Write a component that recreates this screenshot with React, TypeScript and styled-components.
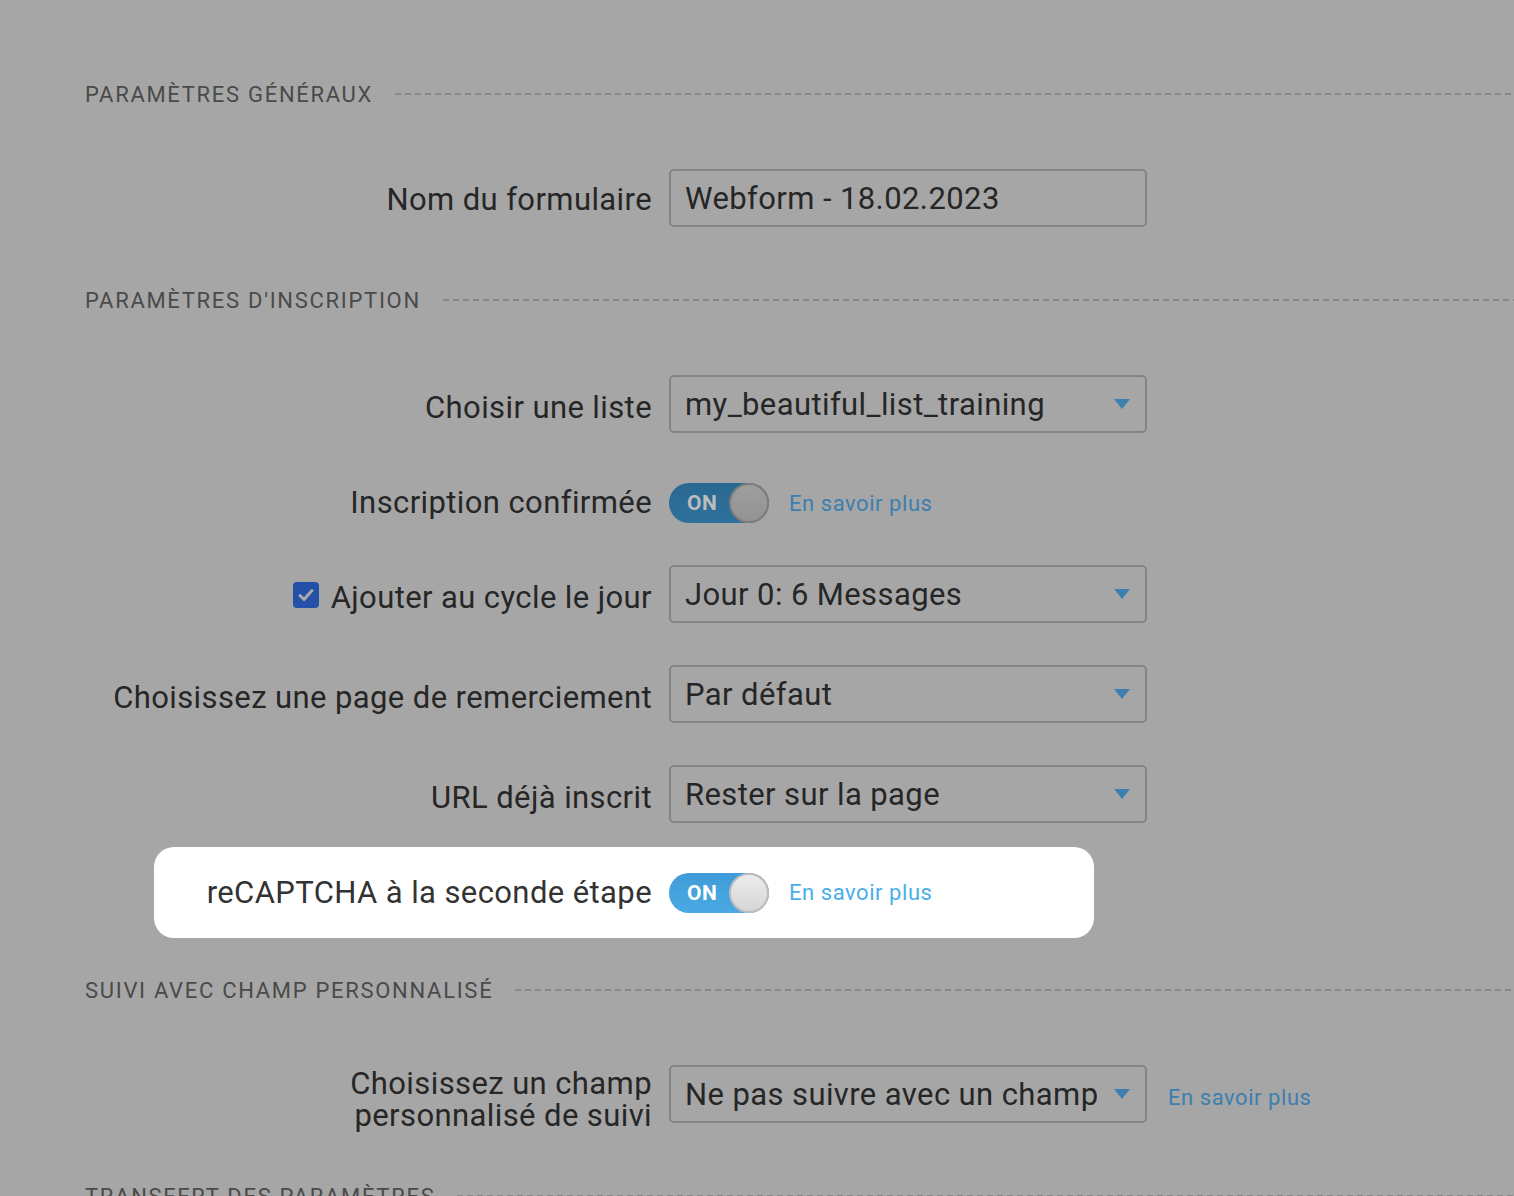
import React from "react";
import styled, { createGlobalStyle, css } from "styled-components";

const GlobalStyle = createGlobalStyle`
  html, body {
    margin: 0;
    padding: 0;
    background: #a6a6a6;
    font-family: Roboto, "Liberation Sans", Arial, sans-serif;
    overflow: hidden;
  }
`;

const Page = styled.div`
  width: 1514px;
  height: 1196px;
  overflow: hidden;
  padding-top: 42px;
  box-sizing: border-box;
`;

const SectionHeading = styled.div`
  display: flex;
  align-items: center;
  height: 106px;
  padding-left: 85px;
  padding-bottom: 2px;
  box-sizing: border-box;

  span {
    font-size: 22px;
    letter-spacing: 1.7px;
    color: #4a4a4a;
    white-space: nowrap;
  }

  &::after {
    content: "";
    flex: 1;
    height: 2px;
    margin-left: 22px;
    background: repeating-linear-gradient(
      to right,
      #888888 0 6px,
      transparent 6px 10px
    );
  }
`;

const Row = styled.div<{ $height?: number; $lit?: boolean; $shift?: number }>`
  display: grid;
  grid-template-columns: 567px 478px auto;
  column-gap: 17px;
  align-items: center;
  height: ${(p) => p.$height ?? 100}px;
  padding-top: ${(p) => p.$shift ?? 0}px;
  padding-left: 85px;
  box-sizing: border-box;

  ${(p) =>
    p.$lit &&
    css`
      background: #ffffff;
      border-radius: 20px;
      margin: 3px 0 0 154px;
      width: 940px;
      padding-left: 0;
      grid-template-columns: 498px 478px;
    `}
`;

const Label = styled.label<{ $lit?: boolean; $drop?: number }>`
  display: flex;
  align-items: center;
  justify-content: flex-end;
  gap: 10px;
  text-align: right;
  padding-top: ${(p) => p.$drop ?? 0}px;
  font-size: 31px;
  letter-spacing: 0.4px;
  line-height: 32px;
  color: ${(p) => (p.$lit ? "#333333" : "#262626")};
`;

const Check = styled.span`
  display: inline-flex;
  align-items: center;
  justify-content: center;
  width: 26px;
  height: 26px;
  border-radius: 4px;
  background: #2450a8;
  margin: -6px 2px 0 0;
`;

const Field = styled.div`
  position: relative;
  height: 58px;
  border: 2px solid #848484;
  border-radius: 5px;
  box-sizing: border-box;
  display: flex;
  align-items: center;
  padding: 0 48px 0 14px;
  font-size: 31px;
  letter-spacing: 0.4px;
  color: #262626;
`;

const Value = styled.span`
  flex: 1;
  overflow: hidden;
  white-space: nowrap;
`;

const Caret = styled.span`
  position: absolute;
  right: 15px;
  top: 50%;
  margin-top: -5px;
  width: 0;
  height: 0;
  border-left: 8px solid transparent;
  border-right: 8px solid transparent;
  border-top: 10px solid #3d7fae;
`;

const Inline = styled.div`
  display: flex;
  align-items: center;
  gap: 20px;
`;

const Toggle = styled.span<{ $lit?: boolean }>`
  position: relative;
  display: inline-flex;
  align-items: center;
  width: 100px;
  height: 40px;
  border-radius: 20px;
  box-sizing: border-box;
  padding-left: 18px;
  font-size: 21px;
  font-weight: 700;
  letter-spacing: 0.5px;
  background: ${(p) =>
    p.$lit
      ? "linear-gradient(#3f9cd8, #4aa9e2)"
      : "linear-gradient(#2a6892, #2f719d)"};
  color: ${(p) => (p.$lit ? "#ffffff" : "#bcbcbc")};
`;

const Knob = styled.span<{ $lit?: boolean }>`
  position: absolute;
  right: 0;
  top: 0;
  width: 40px;
  height: 40px;
  border-radius: 50%;
  box-sizing: border-box;
  border: 2px solid ${(p) => (p.$lit ? "#bdbdbd" : "#7e7e7e")};
  background: ${(p) =>
    p.$lit
      ? "linear-gradient(#ececec, #d6d6d6)"
      : "linear-gradient(#9e9e9e, #939393)"};
`;

const Link = styled.a<{ $lit?: boolean; $offset?: number }>`
  font-size: 22px;
  letter-spacing: 0.55px;
  margin-left: ${(p) => p.$offset ?? 0}px;
  padding-top: ${(p) => (p.$offset ? 6 : 0)}px;
  color: ${(p) => (p.$lit ? "#4aaeea" : "#3d7fae")};
  text-decoration: none;
  white-space: nowrap;
  cursor: pointer;
`;

const Select = ({ value }: { value: string }) => (
  <Field>
    <Value>{value}</Value>
    <Caret />
  </Field>
);

const Switch = ({ lit }: { lit?: boolean }) => (
  <Toggle $lit={lit}>
    ON
    <Knob $lit={lit} />
  </Toggle>
);

export default function App() {
  return (
    <>
      <GlobalStyle />
      <Page>
        <SectionHeading>
          <span>PARAMÈTRES GÉNÉRAUX</span>
        </SectionHeading>
        <Row>
          <Label $drop={4}>Nom du formulaire</Label>
          <Field>
            <Value>Webform - 18.02.2023</Value>
          </Field>
        </Row>

        <SectionHeading>
          <span>PARAMÈTRES D'INSCRIPTION</span>
        </SectionHeading>
        <Row>
          <Label $drop={8}>Choisir une liste</Label>
          <Select value="my_beautiful_list_training" />
        </Row>
        <Row $height={90} $shift={8}>
          <Label>Inscription confirmée</Label>
          <Inline>
            <Switch />
            <Link>En savoir plus</Link>
          </Inline>
        </Row>
        <Row>
          <Label $drop={8}>
            <Check>
              <svg width="18" height="18" viewBox="0 0 18 18">
                <path
                  d="M3 9.5l4 4L15 4.5"
                  fill="none"
                  stroke="#a9a9a9"
                  strokeWidth="3"
                  strokeLinecap="round"
                  strokeLinejoin="round"
                />
              </svg>
            </Check>
            Ajouter au cycle le jour
          </Label>
          <Select value="Jour 0: 6 Messages" />
        </Row>
        <Row>
          <Label $drop={8}>Choisissez une page de remerciement</Label>
          <Select value="Par défaut" />
        </Row>
        <Row>
          <Label $drop={8}>URL déjà inscrit</Label>
          <Select value="Rester sur la page" />
        </Row>
        <Row $lit $height={91}>
          <Label $lit>reCAPTCHA à la seconde étape</Label>
          <Inline>
            <Switch lit />
            <Link $lit>En savoir plus</Link>
          </Inline>
        </Row>

        <SectionHeading>
          <span>SUIVI AVEC CHAMP PERSONNALISÉ</span>
        </SectionHeading>
        <Row>
          <Label $drop={12}>
            Choisissez un champ
            <br />
            personnalisé de suivi
          </Label>
          <Select value="Ne pas suivre avec un champ personnalisé" />
          <Link $offset={4}>En savoir plus</Link>
        </Row>

        <SectionHeading>
          <span>TRANSFERT DES PARAMÈTRES</span>
        </SectionHeading>
      </Page>
    </>
  );
}
